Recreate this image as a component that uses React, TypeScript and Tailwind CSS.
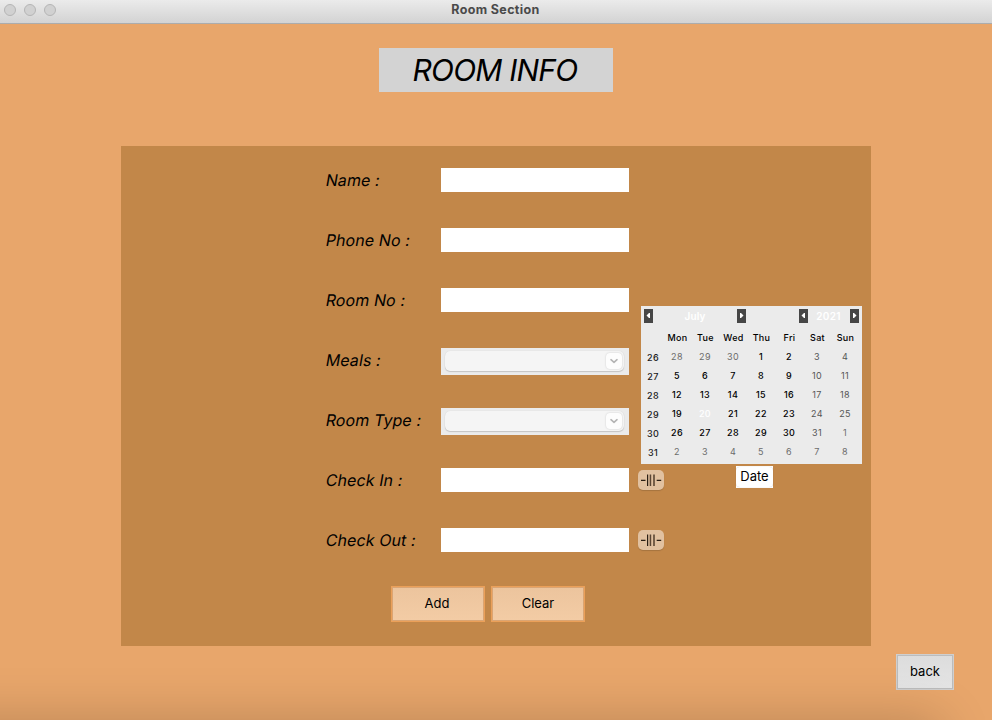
import React from "react";

const weeks: { no: number; days: number[] }[] = [
  { no: 26, days: [28, 29, 30, 1, 2, 3, 4] },
  { no: 27, days: [5, 6, 7, 8, 9, 10, 11] },
  { no: 28, days: [12, 13, 14, 15, 16, 17, 18] },
  { no: 29, days: [19, 20, 21, 22, 23, 24, 25] },
  { no: 30, days: [26, 27, 28, 29, 30, 31, 1] },
  { no: 31, days: [2, 3, 4, 5, 6, 7, 8] },
];
const weekdays = ["Mon", "Tue", "Wed", "Thu", "Fri", "Sat", "Sun"];

function dayColor(week: number, col: number, day: number) {
  const outside = (week === 0 && day > 20) || (week === 4 && day === 1) || week === 5;
  if (outside) return "text-[#6c6c6c] font-normal";
  if (week === 3 && col === 1) return "text-white font-medium";
  if (col > 4) return "text-[#555555] font-normal";
  return "text-black font-medium";
}

function Arrow({ left = false }: { left?: boolean }) {
  return (
    <button className="flex h-[14px] w-[9px] shrink-0 items-center justify-center bg-[#464646]">
      <svg width="9" height="14" viewBox="0 0 9 14" fill="white">
        {left ? <path d="M6 4V9H5L2.5 6.5L5 4Z" /> : <path d="M3 4V9H4L6.5 6.5L4 4Z" />}
      </svg>
    </button>
  );
}

function Calendar() {
  return (
    <div className="h-[158px] w-[221px] bg-[#ebebeb] text-[9px]">
      <div className="flex h-5 items-end px-[3px] pb-[3px] font-semibold text-white">
        <Arrow left />
        <span className="h-[14px] w-[84px] text-center text-[10px] leading-[15px] tracking-[0.1px]">July</span>
        <Arrow />
        <span className="w-[53px]" />
        <Arrow left />
        <span className="h-[14px] w-[42px] pr-px text-center text-[10px] leading-[15px] tracking-[0.3px]">2021</span>
        <Arrow />
      </div>
      <div className="grid h-[22px] grid-cols-[22px_repeat(7,28px)] pt-[2px] pl-[0.5px] text-center leading-[20px] font-[450] tracking-[0.3px] text-black">
        <span />
        {weekdays.map((d) => (
          <span key={d}>{d}</span>
        ))}
      </div>
      {weeks.map((w, i) => (
        <div key={w.no} className="grid h-[19px] grid-cols-[22px_repeat(7,28px)] text-center leading-[18px] tracking-[0.35px]">
          <span className="pt-px pl-[2px] font-medium text-[#1a1a1a]">{w.no}</span>
          {w.days.map((d, c) => (
            <span key={c} className={dayColor(i, c, d)}>{d}</span>
          ))}
        </div>
      ))}
    </div>
  );
}

function Field() {
  return <input className="h-6 w-[188px] shrink-0 bg-white outline-none" />;
}

function Combo() {
  return (
    <div className="h-[27px] w-[188px] shrink-0 bg-[#ebebeb] py-[3px] pl-1">
      <div className="flex h-5 w-[179px] items-center justify-end rounded-[5px] bg-[#f5f5f5] pr-[2px] shadow-[0_1px_1px_rgba(0,0,0,0.16),0_0_1px_rgba(0,0,0,0.12)]">
        <span className="flex h-4 w-4 items-center justify-center rounded-[4px] bg-[#fdfdfd] shadow-[0_0_2px_rgba(0,0,0,0.18)]">
          <svg width="8" height="6" viewBox="0 0 8 6" fill="none" stroke="#b4b4b4" strokeWidth="1.6" strokeLinecap="round" strokeLinejoin="round">
            <path d="M1 1.7L4 4.3L7 1.7" />
          </svg>
        </span>
      </div>
    </div>
  );
}

function PickButton() {
  return (
    <button className="mt-[2px] ml-[9px] flex h-5 w-[26px] shrink-0 items-center justify-center rounded-[5px] bg-[#e1c1a0] shadow-[0_1px_1px_rgba(0,0,0,0.15)]">
      <svg width="26" height="20" viewBox="0 0 26 20" fill="#2b2015">
        <path d="M3 9.8H7.5V11.1H3ZM18.7 9.8H23.2V11.1H18.7Z" />
        <path d="M9 4.5H10.2V16H9Z" />
        <path fill="#5b4634" d="M11.7 4.5H13.2V16H11.7ZM15.2 4.5H16.8V16H15.2Z" />
      </svg>
    </button>
  );
}

function Row({ label, children }: { label: string; children: React.ReactNode }) {
  return (
    <div className="flex h-[60px] items-start">
      <label className="w-[115px] shrink-0 text-[16px] leading-[24px] font-normal tracking-[0.1px] whitespace-nowrap text-black">
        <span className="inline-block -skew-x-[10deg]">{label}</span>
      </label>
      {children}
    </div>
  );
}

export default function App() {
  return (
    <div className="flex h-[720px] w-[992px] flex-col overflow-hidden bg-[#e8a66b] font-['Inter',sans-serif]">
      <header className="flex h-6 shrink-0 items-start border-b border-[#acacac] bg-linear-to-b from-[#ebebeb] to-[#d3d3d3]">
        <div className="flex w-[120px] gap-2 pt-1 pl-1">
          <span className="h-3 w-3 rounded-full border border-[#b5b5b5] bg-[#d1d1d1]" />
          <span className="h-3 w-3 rounded-full border border-[#b5b5b5] bg-[#d1d1d1]" />
          <span className="h-3 w-3 rounded-full border border-[#b5b5b5] bg-[#d1d1d1]" />
        </div>
        <div className="flex-1 pr-[121px] text-center text-[12.5px] leading-[19px] font-bold tracking-[0.35px] text-[#4a4a4a]">Room Section</div>
      </header>

      <h1 className="mt-6 flex h-11 w-[234px] shrink-0 items-center justify-center self-center bg-[#d3d3d3] pt-px pr-[2px] text-[30px] font-normal tracking-[-0.8px] text-black italic">
        ROOM INFO
      </h1>

      <main className="mt-[54px] flex h-[500px] w-[750px] shrink-0 self-center bg-[#c28749]">
        <div className="flex w-[508px] flex-col pt-[22px] pl-[205px]">
          <Row label="Name :"><Field /></Row>
          <Row label="Phone No :"><Field /></Row>
          <Row label="Room No :"><Field /></Row>
          <Row label="Meals :"><Combo /></Row>
          <Row label="Room Type :"><Combo /></Row>
          <Row label="Check In :"><Field /><PickButton /></Row>
          <Row label="Check Out :"><Field /><PickButton /></Row>
          <div className="-mt-[2px] ml-[65px] flex gap-[6px]">
            <button className="h-9 w-[94px] shrink-0 border border-[#eba059] bg-linear-to-b from-[#ecc49d] to-[#f3cca5] pr-[2px] text-[13px] text-black inset-ring inset-ring-[#dba573]">Add</button>
            <button className="h-9 w-[94px] shrink-0 border border-[#eba059] bg-linear-to-b from-[#ecc49d] to-[#f3cca5] text-[13px] text-black inset-ring inset-ring-[#dba573]">Clear</button>
          </div>
        </div>
        <aside className="flex flex-col items-start pt-[160px] pl-3">
          <Calendar />
          <button className="mt-[2px] ml-[95px] h-[22px] w-[37px] bg-white">
            <span className="block h-[20px] rounded-[4px] text-[13px] leading-[18px] text-black shadow-[0_0_1px_rgba(0,0,0,0.25)]">Date</span>
          </button>
        </aside>
      </main>

      <footer className="flex h-[74px] shrink-0 justify-end pt-2 pr-[38px]">
        <button className="h-9 w-[58px] border border-[#cfcfcf] bg-linear-to-b from-[#dcdcdc] to-[#e5e5e5] text-[13px] text-black inset-ring inset-ring-[#bcbcbc]">back</button>
      </footer>
      <div className="-ml-20 h-40 w-[1020px] shrink-0 shadow-[0_0_50px_rgba(0,0,0,0.2)]" />
    </div>
  );
}
